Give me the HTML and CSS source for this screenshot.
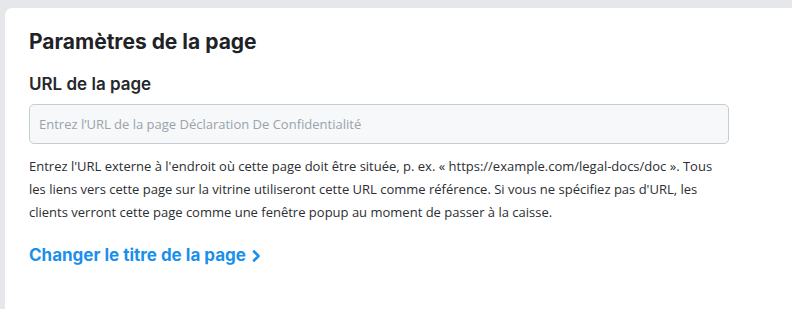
FILE: index.html
```html
<!DOCTYPE html>
<html lang="fr">
<head>
<meta charset="utf-8">
<link rel="stylesheet" href="styles.css">
</head>
<body>
<div class="card">
  <h1 class="title">Paramètres de la page</h1>
  <label class="label" for="url">URL de la page</label>
  <input class="input" id="url" type="text" placeholder="Entrez l’URL de la page Déclaration De Confidentialité">
  <p class="help">Entrez l'URL externe à l'endroit où cette page doit être située, p. ex. « https://example.com/legal-docs/doc ». Tous les liens vers cette page sur la vitrine utiliseront cette URL comme référence. Si vous ne spécifiez pas d'URL, les clients verront cette page comme une fenêtre popup au moment de passer à la caisse.</p>
  <a class="link" href="#">Changer le titre de la page
    <svg class="chev" width="9" height="12" viewBox="0 0 9 12"><path d="M2 1.5 L6.5 6 L2 10.5" fill="none" stroke="currentColor" stroke-width="2.6" stroke-linecap="round" stroke-linejoin="round"/></svg>
  </a>
</div>
</body>
</html>
```
FILE: styles.css
```css
html, body { margin: 0; padding: 0; }
body {
  background: #e6e7ea;
  width: 792px;
  height: 309px;
  overflow: hidden;
  padding: 8px 0 0 5px;
  box-sizing: border-box;
}
.card {
  background: #fff;
  border-top-left-radius: 7px;
  height: 301px;
  padding: 22px 63px 0 24px;
  box-sizing: border-box;
  display: flex;
  flex-direction: column;
  align-items: flex-start;
}
.title {
  margin: 0;
  font-family: Inter, "Open Sans", sans-serif;
  font-weight: 700;
  font-size: 21px;
  line-height: 24px;
  color: #1f2226;
}
.label {
  margin-top: 20px;
  font-family: Inter, "Open Sans", sans-serif;
  font-weight: 600;
  font-size: 17px;
  line-height: 20px;
  color: #24272b;
}
.input {
  margin-top: 10px;
  width: 700px;
  height: 40px;
  box-sizing: border-box;
  border: 1px solid #c4ccd4;
  border-radius: 5px;
  background: #f6f8f9;
  padding: 0 9px;
  font-family: "Open Sans", sans-serif;
  font-size: 13px;
  color: #333;
  outline: none;
}
.input::placeholder { color: #9aa3ab; }
.help {
  margin: 11px 0 0;
  font-family: "Open Sans", sans-serif;
  font-size: 13px;
  line-height: 23px;
  color: #2b2e33;
  width: 700px;
}
.link {
  margin-top: 21px;
  font-family: Inter, "Open Sans", sans-serif;
  font-weight: 700;
  font-size: 17px;
  line-height: 20px;
  color: #1a8fec;
  text-decoration: none;
  display: flex;
  align-items: center;
  gap: 6px;
}
.chev { display: block; margin-top: 1px; }
```
